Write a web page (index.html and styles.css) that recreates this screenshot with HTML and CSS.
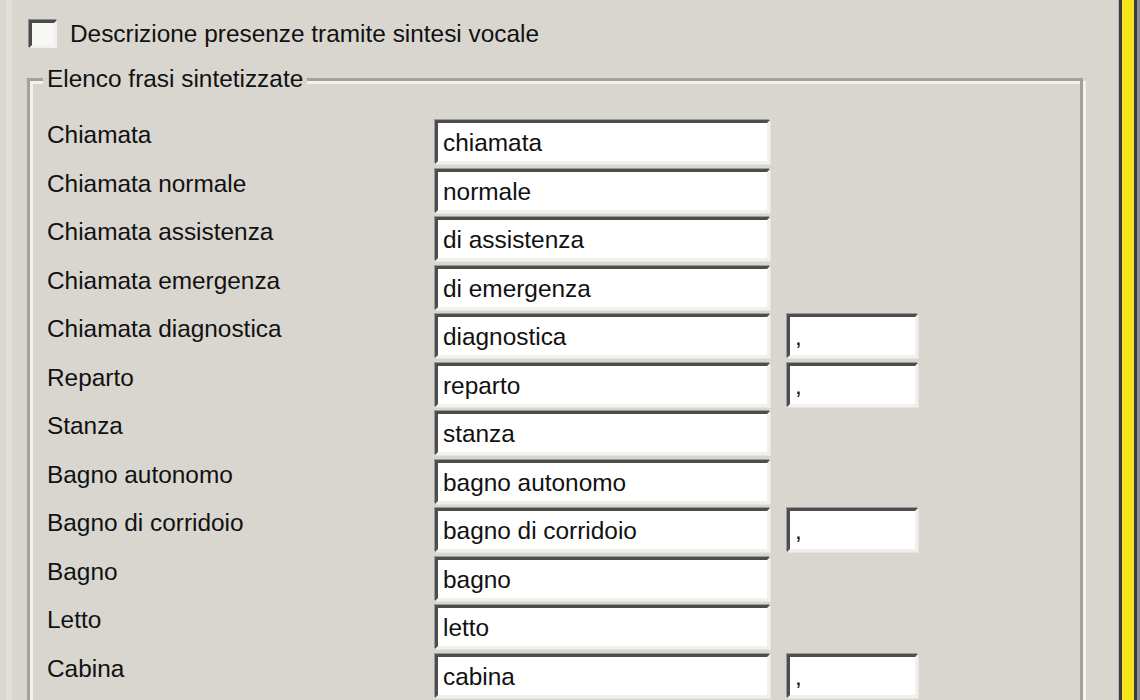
FILE: index.html
```html
<!DOCTYPE html>
<html lang="it">
<head>
<meta charset="utf-8">
<title>Sintesi vocale</title>
<link rel="stylesheet" href="styles.css">
</head>
<body>
<div class="window">
  <div class="panel">
    <div class="check">
      <span class="box"></span>
      <span class="check-text">Descrizione presenze tramite sintesi vocale</span>
    </div>
    <fieldset class="group">
      <legend>Elenco frasi sintetizzate</legend>
      <div class="rows">
        <span class="lbl">Chiamata</span><span class="field">chiamata</span><span></span>
        <span class="lbl">Chiamata normale</span><span class="field">normale</span><span></span>
        <span class="lbl">Chiamata assistenza</span><span class="field">di assistenza</span><span></span>
        <span class="lbl">Chiamata emergenza</span><span class="field">di emergenza</span><span></span>
        <span class="lbl">Chiamata diagnostica</span><span class="field">diagnostica</span><span class="field small">,</span>
        <span class="lbl">Reparto</span><span class="field">reparto</span><span class="field small">,</span>
        <span class="lbl">Stanza</span><span class="field">stanza</span><span></span>
        <span class="lbl">Bagno autonomo</span><span class="field">bagno autonomo</span><span></span>
        <span class="lbl">Bagno di corridoio</span><span class="field">bagno di corridoio</span><span class="field small">,</span>
        <span class="lbl">Bagno</span><span class="field">bagno</span><span></span>
        <span class="lbl">Letto</span><span class="field">letto</span><span></span>
        <span class="lbl">Cabina</span><span class="field">cabina</span><span class="field small">,</span>
      </div>
    </fieldset>
  </div>
  <div class="edge"></div>
</div>
</body>
</html>
```
FILE: styles.css
```css
html, body {
  margin: 0;
  padding: 0;
  background: #d9d6d0;
}
body {
  font-family: "Liberation Sans", Arial, sans-serif;
  font-size: 24.4px;
  color: #111;
}
.window {
  width: 1140px;
  height: 700px;
  display: flex;
  overflow: hidden;
  background: #d9d6d0;
}
.panel {
  flex: 1;
  padding: 20px 0 0 27px;
  background: linear-gradient(to right, #d9d6d0 6px, #e1dfda 6px, #e1dfda 12px, #d9d6d0 12px);
}
.check {
  display: flex;
  align-items: center;
  gap: 13px;
  margin-left: 2px;
  height: 28px;
}
.box {
  box-sizing: border-box;
  width: 28px;
  height: 28px;
  background: #f7f7f5;
  border-style: solid;
  border-width: 3px;
  border-color: #4a4a4a #f2f1ee #f2f1ee #4a4a4a;
  box-shadow: -1px -1px 0 #8c8c8c;
}
.check-text {
  line-height: 26px;
}
.group {
  box-sizing: border-box;
  width: 1056px;
  margin: 19px 0 0 0;
  padding: 29px 0 0 17px;
  border: 3px solid #a3a19c;
  box-shadow: inset 3px 3px 0 #f3f2ef, 3px 3px 0 #f3f2ef;
  height: 700px;
}
.group legend {
  margin-left: -4px;
  padding: 0 4px 0 4px;
  line-height: 24px;
  background: #d9d6d0;
}
.rows {
  display: grid;
  grid-template-columns: 388px 335px 131px;
  column-gap: 0;
  grid-auto-rows: 44px;
  row-gap: 4.5px;
}
.rows > :nth-child(3n) {
  margin-left: 17px;
}
.lbl {
  line-height: 26px;
  padding-top: 2px;
  white-space: nowrap;
}
.field {
  box-sizing: border-box;
  height: 44px;
  background: #ffffff;
  border-style: solid;
  border-width: 3px;
  border-color: #4d4d4d #f1f0ec #f1f0ec #4d4d4d;
  box-shadow: -1px -1px 0 #9a9a9a, 1px 1px 0 #e6e4e0;
  padding: 0 0 0 5px;
  line-height: 40px;
  white-space: nowrap;
  overflow: hidden;
}
.small {
  width: 131px;
}
.edge {
  width: 22px;
  flex: none;
  background: linear-gradient(to right,
    #b8b6b2 0, #b8b6b2 1px,
    #3a3a46 1px, #3a3a46 4px,
    #f8e41c 4px, #f8e41c 16px,
    #3c3c44 16px, #3c3c44 19px,
    #8f8f96 19px);
}
```
